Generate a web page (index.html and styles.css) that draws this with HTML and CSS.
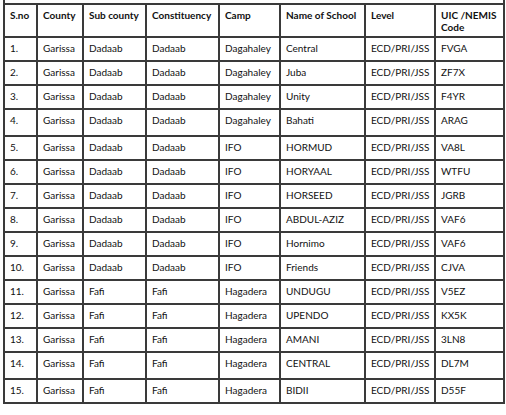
FILE: index.html
```html
<!DOCTYPE html>
<html>
<head>
<meta charset="utf-8">
<link rel="stylesheet" href="styles.css">
</head>
<body>
<div class="sliver"></div>
<table class="schools">
  <colgroup>
    <col class="c1"><col class="c2"><col class="c3"><col class="c4"><col class="c5"><col class="c6"><col class="c7"><col class="c8">
  </colgroup>
  <thead>
    <tr class="head"><th>S.no</th><th>County</th><th>Sub county</th><th>Constituency</th><th>Camp</th><th>Name of School</th><th>Level</th><th>UIC /NEMIS Code</th></tr>
  </thead>
  <tbody>
    <tr><td>1.</td><td>Garissa</td><td>Dadaab</td><td>Dadaab</td><td>Dagahaley</td><td>Central</td><td>ECD/PRI/JSS</td><td>FVGA</td></tr>
    <tr><td>2.</td><td>Garissa</td><td>Dadaab</td><td>Dadaab</td><td>Dagahaley</td><td>Juba</td><td>ECD/PRI/JSS</td><td>ZF7X</td></tr>
    <tr><td>3.</td><td>Garissa</td><td>Dadaab</td><td>Dadaab</td><td>Dagahaley</td><td>Unity</td><td>ECD/PRI/JSS</td><td>F4YR</td></tr>
    <tr class="tall"><td>4.</td><td>Garissa</td><td>Dadaab</td><td>Dadaab</td><td>Dagahaley</td><td>Bahati</td><td>ECD/PRI/JSS</td><td>ARAG</td></tr>
    <tr><td>5.</td><td>Garissa</td><td>Dadaab</td><td>Dadaab</td><td>IFO</td><td>HORMUD</td><td>ECD/PRI/JSS</td><td>VA8L</td></tr>
    <tr><td>6.</td><td>Garissa</td><td>Dadaab</td><td>Dadaab</td><td>IFO</td><td>HORYAAL</td><td>ECD/PRI/JSS</td><td>WTFU</td></tr>
    <tr><td>7.</td><td>Garissa</td><td>Dadaab</td><td>Dadaab</td><td>IFO</td><td>HORSEED</td><td>ECD/PRI/JSS</td><td>JGRB</td></tr>
    <tr><td>8.</td><td>Garissa</td><td>Dadaab</td><td>Dadaab</td><td>IFO</td><td>ABDUL-AZIZ</td><td>ECD/PRI/JSS</td><td>VAF6</td></tr>
    <tr><td>9.</td><td>Garissa</td><td>Dadaab</td><td>Dadaab</td><td>IFO</td><td>Hornimo</td><td>ECD/PRI/JSS</td><td>VAF6</td></tr>
    <tr><td>10.</td><td>Garissa</td><td>Dadaab</td><td>Dadaab</td><td>IFO</td><td>Friends</td><td>ECD/PRI/JSS</td><td>CJVA</td></tr>
    <tr><td>11.</td><td>Garissa</td><td>Fafi</td><td>Fafi</td><td>Hagadera</td><td>UNDUGU</td><td>ECD/PRI/JSS</td><td>V5EZ</td></tr>
    <tr><td>12.</td><td>Garissa</td><td>Fafi</td><td>Fafi</td><td>Hagadera</td><td>UPENDO</td><td>ECD/PRI/JSS</td><td>KX5K</td></tr>
    <tr><td>13.</td><td>Garissa</td><td>Fafi</td><td>Fafi</td><td>Hagadera</td><td>AMANI</td><td>ECD/PRI/JSS</td><td>3LN8</td></tr>
    <tr class="tall"><td>14.</td><td>Garissa</td><td>Fafi</td><td>Fafi</td><td>Hagadera</td><td>CENTRAL</td><td>ECD/PRI/JSS</td><td>DL7M</td></tr>
    <tr><td>15.</td><td>Garissa</td><td>Fafi</td><td>Fafi</td><td>Hagadera</td><td>BIDII</td><td>ECD/PRI/JSS</td><td>D55F</td></tr>
  </tbody>
</table>
</body>
</html>
```

FILE: styles.css
```css
html, body {
  margin: 0;
  padding: 0;
  background: #ffffff;
}
body {
  font-family: Lato, "Open Sans", "Liberation Sans", sans-serif;
  font-size: 10px;
  color: #111111;
}
.sliver {
  box-sizing: border-box;
  margin-left: 3px;
  width: 502px;
  height: 3px;
  border-left: 2px solid #3a3a3a;
  border-right: 2px solid #3a3a3a;
}
.schools {
  margin-left: 3px;
  width: 502px;
  border-collapse: collapse;
  table-layout: fixed;
  border: 2px solid #333333;
}
.c1 { width: 33px; }
.c2 { width: 46px; }
.c3 { width: 63px; }
.c4 { width: 73px; }
.c5 { width: 61px; }
.c6 { width: 85px; }
.c7 { width: 70px; }
.c8 { width: 69px; }
.schools th,
.schools td {
  border: 2px solid #3a3a3a;
  padding: 4px 4px 0 5px;
  vertical-align: top;
  text-align: left;
  line-height: 12px;
  overflow: hidden;
  white-space: nowrap;
}
.schools th {
  font-weight: 700;
  white-space: normal;
  height: 33px;
  box-sizing: border-box;
  padding-top: 4px;
}
.schools td {
  height: 24px;
  box-sizing: border-box;
  padding-top: 4px;
}
.schools tr.tall td {
  height: 27px;
}
```
